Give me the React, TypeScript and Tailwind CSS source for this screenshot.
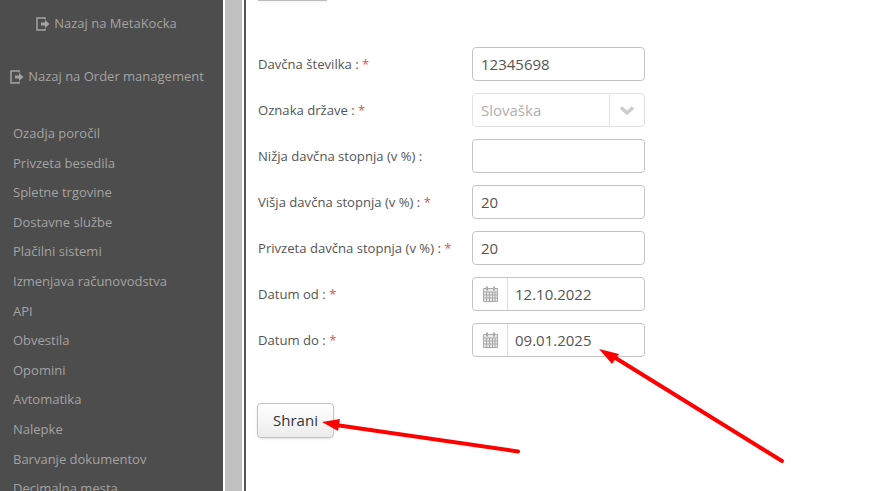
import { ReactNode } from "react";

const menuItems = [
  "Ozadja poročil",
  "Privzeta besedila",
  "Spletne trgovine",
  "Dostavne službe",
  "Plačilni sistemi",
  "Izmenjava računovodstva",
  "API",
  "Obvestila",
  "Opomini",
  "Avtomatika",
  "Nalepke",
  "Barvanje dokumentov",
  "Decimalna mesta",
];

function ExitIcon() {
  return (
    <svg width="14" height="14" viewBox="0 0 14 14" className="shrink-0">
      <path d="M9 2.5V1H1v12h8v-1.5" fill="none" stroke="#a3a3a3" strokeWidth="1.500" />
      <path d="M5 5.5h4V3l4.5 4L9 11V8.5H5z" fill="#a3a3a3" />
    </svg>
  );
}

function CalendarIcon() {
  return (
    <svg width="15" height="16" viewBox="0 0 15 16">
      <path
        d="M.5 2.5h14v13H.5zM.5 6h14M.5 9h14M.5 12h14M3.5 6v9.500M6.500 6v9.500M9.500 6v9.500M12 6v9.500"
        fill="#e8e8e8"
        stroke="#aaa"
      />
      <rect x="3" y="0.500" width="2" height="4" fill="#aaa" />
      <rect x="10" y="0.500" width="2" height="4" fill="#aaa" />
    </svg>
  );
}

function Row({ label, required, children }: { label: string; required?: boolean; children: ReactNode }) {
  return (
    <div className="flex h-[34px] items-center">
      <label className="w-[214px] shrink-0 pt-[1px] text-[13.1px] text-[#555]">
        {label} :{required ? <span className="text-[#d9534f]"> *</span> : null}
      </label>
      {children}
    </div>
  );
}

function TextField({ value }: { value?: string }) {
  return (
    <div className="flex h-[34px] w-[173px] items-center rounded-[4px] border border-[#c4c4c4] bg-white px-[8px] text-[15px] text-[#555]">
      {value}
    </div>
  );
}

function DateField({ value }: { value: string }) {
  return (
    <div className="flex h-[34px] w-[173px] items-center rounded-[4px] border border-[#c4c4c4] bg-white text-[15px] text-[#555]">
      <div className="flex h-full w-[35px] items-center justify-center border-r border-[#ddd]">
        <CalendarIcon />
      </div>
      <span className="pl-[7px]">{value}</span>
    </div>
  );
}

export default function App() {
  return (
    <div className="relative flex h-[491px] w-[894px] overflow-hidden bg-white font-['Open_Sans',sans-serif]">
      <aside className="w-[223px] shrink-0 bg-[#4d4d4d] text-[13px] text-[#a3a3a3]">
        <div className="flex h-[47px] items-center justify-center gap-[4px] pr-[10px]">
          <ExitIcon />
          <span>Nazaj na MetaKocka</span>
        </div>
        <div className="mt-[6px] flex h-[47px] items-center justify-center gap-[4px] pr-[9px]">
          <ExitIcon />
          <span>Nazaj na Order management</span>
        </div>
        <ul className="mt-[19px] pl-[13px]">
          {menuItems.map((item) => (
            <li key={item} className="h-[29.6px] leading-[29.6px]">
              {item}
            </li>
          ))}
        </ul>
      </aside>
      <div className="ml-[2px] w-[17px] shrink-0 bg-[#c0c0c0]" />
      <div className="ml-[2px] w-[1.5px] shrink-0 bg-[#555]" />
      <main className="pl-[12.5px]">
        <div className="h-[1px] w-[69px] bg-[#bbb] shadow-sm" />
        <div className="mt-[46px] flex flex-col gap-[12px]">
          <Row label="Davčna številka" required>
            <TextField value="12345698" />
          </Row>
          <Row label="Oznaka države" required>
            <div className="flex h-[34px] w-[173px] items-center rounded-[4px] border border-[#e2e2e2] bg-white text-[15px] text-[#b0b0b0]">
              <span className="flex-1 pl-[8px]">Slovaška</span>
              <div className="flex h-full w-[35px] items-center justify-center border-l border-[#e2e2e2]">
                <svg width="16" height="11" viewBox="0 0 16 11">
                  <path d="M2 2.500l6 5.500L14 2.500" fill="none" stroke="#ccc" strokeWidth="3.500" />
                </svg>
              </div>
            </div>
          </Row>
          <Row label="Nižja davčna stopnja (v %)">
            <TextField />
          </Row>
          <Row label="Višja davčna stopnja (v %)" required>
            <TextField value="20" />
          </Row>
          <Row label="Privzeta davčna stopnja (v %)" required>
            <TextField value="20" />
          </Row>
          <Row label="Datum od" required>
            <DateField value="12.10.2022" />
          </Row>
          <Row label="Datum do" required>
            <DateField value="09.01.2025" />
          </Row>
        </div>
        <button className="mt-[46px] -ml-[1px] h-[35px] w-[77px] rounded-[4px] border border-[#c4c4c4] bg-gradient-to-b from-white to-[#ececec] text-[15px] text-[#333] shadow-sm">
          Shrani
        </button>
      </main>
      {/* annotation arrows on top of the form */}
      <svg width="894" height="491" className="pointer-events-none absolute left-0 top-0">
        <path d="M782 461L614 357" stroke="#ff0000" strokeWidth="4" strokeLinecap="round" />
        <path d="M599 349L619 354L612 364z" fill="#ff0000" />
        <path d="M518 451.500L336 425" stroke="#ff0000" strokeWidth="4" strokeLinecap="round" />
        <path d="M322 422L340 419L338 431z" fill="#ff0000" />
      </svg>
    </div>
  );
}
